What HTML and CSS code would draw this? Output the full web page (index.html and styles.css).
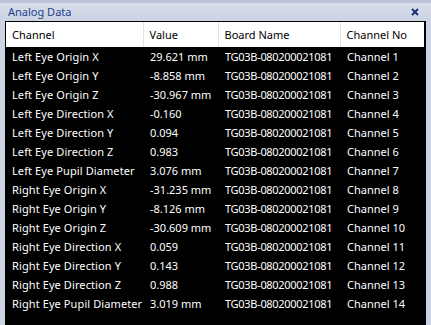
FILE: index.html
```html
<!DOCTYPE html>
<html>
<head>
<meta charset="utf-8">
<link rel="stylesheet" href="styles.css">
</head>
<body>
<div class="panel">
  <div class="topstrip"></div>
  <div class="titlebar">
    <span class="title">Analog Data</span>
    <svg class="close" width="8" height="8" viewBox="0 0 8 8"><path d="M1 1 L7 7 M7 1 L1 7" stroke="#1b3278" stroke-width="2" fill="none"/></svg>
  </div>
  <div class="grid">
    <table class="data">
      <colgroup>
        <col class="c1"><col class="c2"><col class="c3"><col class="c4">
      </colgroup>
      <thead>
        <tr><th>Channel</th><th>Value</th><th>Board Name</th><th>Channel No</th></tr>
      </thead>
      <tbody>
        <tr><td>Left Eye Origin X</td><td>29.621 mm</td><td>TG03B-080200021081</td><td>Channel 1</td></tr>
        <tr><td>Left Eye Origin Y</td><td>-8.858 mm</td><td>TG03B-080200021081</td><td>Channel 2</td></tr>
        <tr><td>Left Eye Origin Z</td><td>-30.967 mm</td><td>TG03B-080200021081</td><td>Channel 3</td></tr>
        <tr><td>Left Eye Direction X</td><td>-0.160</td><td>TG03B-080200021081</td><td>Channel 4</td></tr>
        <tr><td>Left Eye Direction Y</td><td>0.094</td><td>TG03B-080200021081</td><td>Channel 5</td></tr>
        <tr><td>Left Eye Direction Z</td><td>0.983</td><td>TG03B-080200021081</td><td>Channel 6</td></tr>
        <tr><td>Left Eye Pupil Diameter</td><td>3.076 mm</td><td>TG03B-080200021081</td><td>Channel 7</td></tr>
        <tr><td>Right Eye Origin X</td><td>-31.235 mm</td><td>TG03B-080200021081</td><td>Channel 8</td></tr>
        <tr><td>Right Eye Origin Y</td><td>-8.126 mm</td><td>TG03B-080200021081</td><td>Channel 9</td></tr>
        <tr><td>Right Eye Origin Z</td><td>-30.609 mm</td><td>TG03B-080200021081</td><td>Channel 10</td></tr>
        <tr><td>Right Eye Direction X</td><td>0.059</td><td>TG03B-080200021081</td><td>Channel 11</td></tr>
        <tr><td>Right Eye Direction Y</td><td>0.143</td><td>TG03B-080200021081</td><td>Channel 12</td></tr>
        <tr><td>Right Eye Direction Z</td><td>0.988</td><td>TG03B-080200021081</td><td>Channel 13</td></tr>
        <tr><td>Right Eye Pupil Diameter</td><td>3.019 mm</td><td>TG03B-080200021081</td><td>Channel 14</td></tr>
      </tbody>
    </table>
  </div>
</div>
</body>
</html>
```

FILE: styles.css
```css
html, body {
  margin: 0;
  padding: 0;
  background: #cdd3e2;
}
.panel {
  width: 431px;
  height: 325px;
  display: flex;
  flex-direction: column;
  background: #cdd3e2;
  overflow: hidden;
  font-family: "Noto Sans", "Open Sans", sans-serif;
}
.topstrip {
  height: 3px;
  background: #bcc3d6;
  flex: none;
}
.titlebar {
  height: 18px;
  flex: none;
  display: flex;
  align-items: center;
  justify-content: space-between;
  padding: 0 12px 0 8px;
  background: linear-gradient(#d9deea, #cbd2e2);
}
.title {
  color: #23418f;
  font-size: 11px;
  line-height: 18px;
}
.close {
  display: block;
}
.grid {
  flex: 1;
  margin: 0 5px 0 5px;
  background: #000;
  border: 1px solid #000;
  border-right-width: 2px;
  border-bottom: none;
}
.data {
  width: 100%;
  border-collapse: collapse;
  table-layout: fixed;
  font-size: 11px;
}
.c1 { width: 137px; }
.c2 { width: 75px; }
.c3 { width: 122px; }
.c4 { width: auto; }
.data th {
  background: #fff;
  color: #000;
  font-weight: normal;
  text-align: left;
  height: 25px;
  padding: 0 0 0 6px;
  border-left: 1px solid #e3e3e3;
  white-space: nowrap;
}
.data th:first-child { border-left: none; }
.data td {
  color: #fff;
  height: 19px;
  padding: 0 0 0 6px;
  white-space: nowrap;
  overflow: hidden;
}
.data td:first-child {
  letter-spacing: 0.1px;
}
.data td:nth-child(2), .data td:nth-child(3), .data td:nth-child(4) {
  padding-left: 7px;
}
.data td:nth-child(3) {
  letter-spacing: -0.3px;
}
```
